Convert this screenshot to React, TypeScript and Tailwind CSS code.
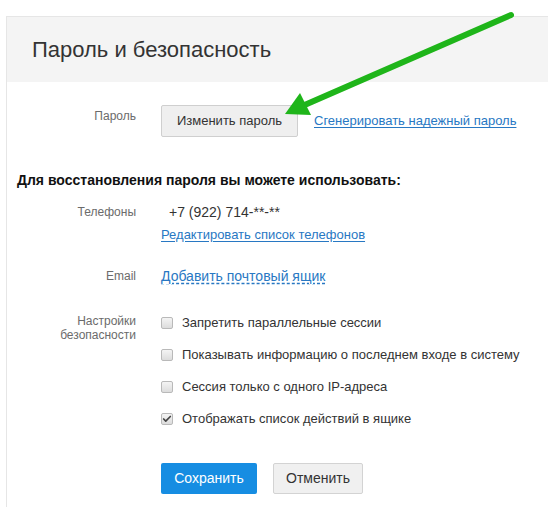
import { Check } from 'lucide-react'

const font = { fontFamily: '"Liberation Sans", Arial, sans-serif' }

type Option = { label: string; checked?: boolean }

const options: Option[] = [
  { label: 'Запретить параллельные сессии' },
  { label: 'Показывать информацию о последнем входе в систему' },
  { label: 'Сессия только с одного IP-адреса' },
  { label: 'Отображать список действий в ящике', checked: true },
]

function Box({ checked }: { checked?: boolean }) {
  return (
    <span className="w-[12px] h-[12px] shrink-0 rounded-[2px] border border-[#b9b9b9] bg-gradient-to-b from-[#f4f4f4] to-[#dcdcdc] flex items-center justify-center">
      {checked && <Check size={10} strokeWidth={4} className="text-[#444]" />}
    </span>
  )
}

function Label({ children }: { children: React.ReactNode }) {
  return <div className="w-[129px] shrink-0 text-right text-[12px] text-[#6b6b6b]">{children}</div>
}

export default function App() {
  return (
    <div className="relative w-full h-[507px] bg-white pt-4 pl-[6px] overflow-hidden" style={font}>
      <div className="h-full border-t border-l border-[#e6e6e6]">
        {/* Header */}
        <div className="h-[65px] bg-[#f4f4f4] pl-[25px] flex items-center">
          <h1 className="text-[22px] text-[#333]">Пароль и безопасность</h1>
        </div>

        {/* Password */}
        <div className="mt-[23px] flex items-start gap-[25px]">
          <Label>
            <div className="pt-[3px] leading-4">Пароль</div>
          </Label>
          <div className="flex items-center gap-4">
            <button className="w-[137px] h-[32px] bg-[#efefef] border border-[#cfcfcf] rounded-[2px] text-[13px] text-[#333]">
              Изменить пароль
            </button>
            <a href="#" className="text-[13px] text-[#2878c3] underline underline-offset-2">
              Сгенерировать надежный пароль
            </a>
          </div>
        </div>

        <p className="mt-[33px] ml-[10px] text-[14px] leading-5 font-bold text-[#111]">
          Для восстановления пароля вы можете использовать:
        </p>

        {/* Phones */}
        <div className="mt-[12px] flex items-start gap-[25px]">
          <Label>
            <div className="leading-5">Телефоны</div>
          </Label>
          <div className="flex flex-col">
            <span className="pl-2 text-[14px] leading-5 text-[#333]">+7 (922) 714-**-**</span>
            <a href="#" className="mt-[3px] text-[13px] leading-5 text-[#2878c3] underline underline-offset-2">
              Редактировать список телефонов
            </a>
          </div>
        </div>

        {/* Email */}
        <div className="mt-[21px] flex items-start gap-[25px]">
          <Label>
            <div className="leading-5">Email</div>
          </Label>
          <a
            href="#"
            className="text-[14px] leading-5 text-[#2878c3] underline decoration-dashed underline-offset-2"
          >
            Добавить почтовый ящик
          </a>
        </div>

        {/* Security */}
        <div className="mt-[27px] flex items-start gap-[25px]">
          <Label>
            <div className="pt-[1px] leading-[14px]">
              Настройки
              <br />
              безопасности
            </div>
          </Label>
          <div className="flex flex-col gap-3">
            {options.map((o) => (
              <label key={o.label} className="h-5 flex items-center gap-[9px] text-[13px] text-[#333]">
                <Box checked={o.checked} />
                {o.label}
              </label>
            ))}
          </div>
        </div>

        <div className="mt-[34px] ml-[154px] flex gap-4">
          <button className="w-[96px] h-[31px] rounded-[2px] bg-[#168de2] text-white text-[14px]">Сохранить</button>
          <button className="w-[90px] h-[31px] rounded-[2px] bg-[#f0f0f0] border border-[#d3d3d3] text-[#333] text-[14px]">
            Отменить
          </button>
        </div>
      </div>

      {/* Green arrow */}
      <svg className="absolute inset-0 pointer-events-none" width="548" height="507">
        <line x1="511" y1="15" x2="300" y2="107" stroke="#1fb51a" strokeWidth="6" strokeLinecap="round" />
        <polygon points="285,114 300,93 311,115" fill="#1fb51a" />
      </svg>
    </div>
  )
}
